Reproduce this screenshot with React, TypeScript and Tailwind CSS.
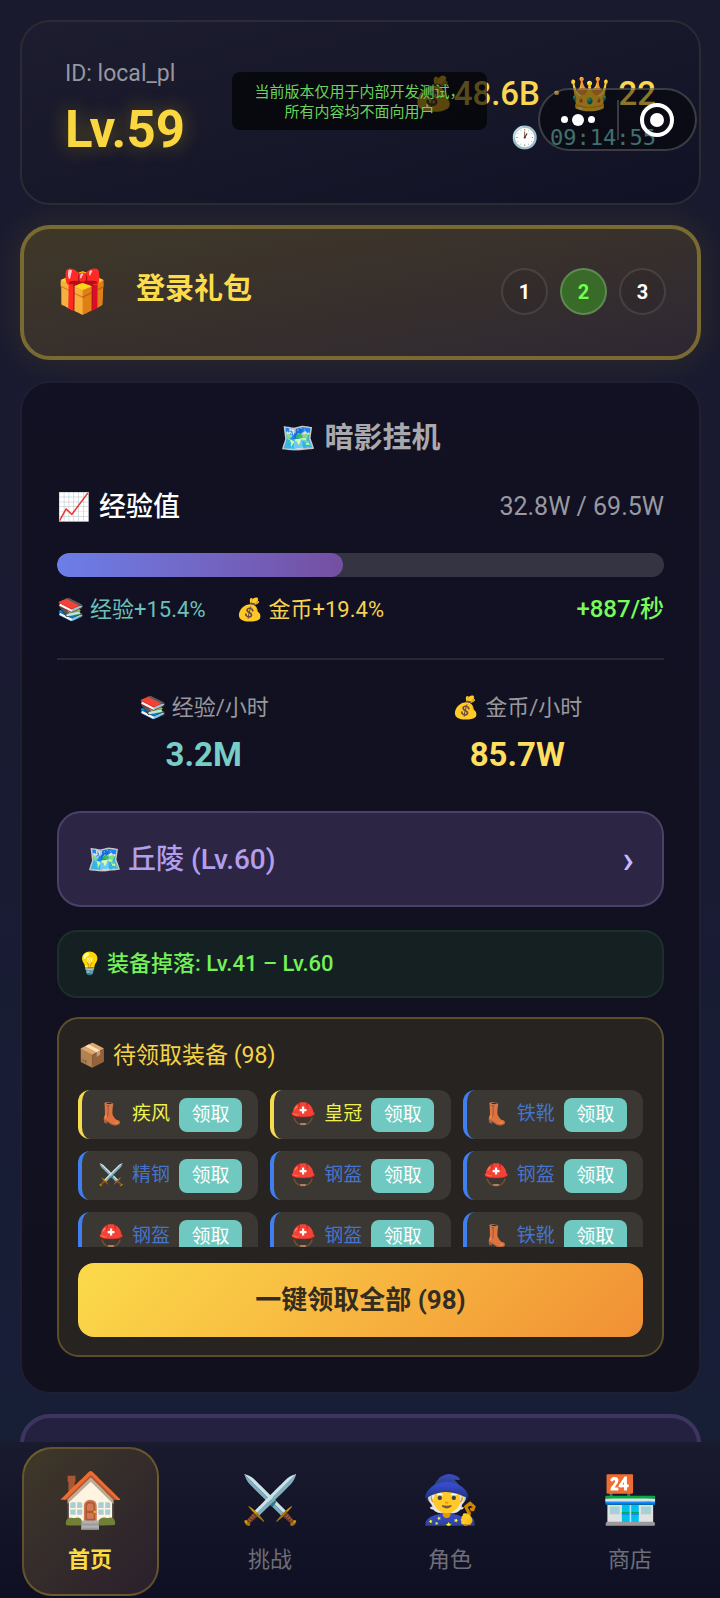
import { useState } from "react";

const days = [
  { day: 1, claimed: false },
  { day: 2, claimed: true },
  { day: 3, claimed: false },
];

const stats = [
  { icon: "📚", label: "经验/小时", value: "3.2M", color: "text-[#78cdc6]" },
  { icon: "💰", label: "金币/小时", value: "85.7W", color: "text-[#ffdf5f]" },
];

const loot = [
  { icon: "👢", name: "疾风", rare: true },
  { icon: "⛑️", name: "皇冠", rare: true },
  { icon: "👢", name: "铁靴", rare: false },
  { icon: "⚔️", name: "精钢", rare: false },
  { icon: "⛑️", name: "钢盔", rare: false },
  { icon: "⛑️", name: "钢盔", rare: false },
  { icon: "⛑️", name: "钢盔", rare: false },
  { icon: "⛑️", name: "钢盔", rare: false },
  { icon: "👢", name: "铁靴", rare: false },
];

const tabs = [
  { id: "home", icon: "🏠", label: "首页" },
  { id: "battle", icon: "⚔️", label: "挑战" },
  { id: "role", icon: "🧙", label: "角色" },
  { id: "shop", icon: "🏪", label: "商店" },
];

const exp = { current: 32.8, max: 69.5 };

const Header = () => (
  <header className="relative flex h-[185px] justify-between rounded-[30px] border-2 border-[#2b2b34] bg-linear-to-br from-[#1d1d2f] to-[#121226] px-[43px] pt-[36px]">
    <div>
      <p className="text-[23px] leading-[32px] text-[#97979f]">ID: local_pl</p>
      <p className="mt-[12px] text-[51px] leading-[56px] font-bold text-[#fad73f] [text-shadow:0_0_20px_rgba(255,215,0,0.35)]">
        Lv.59
      </p>
    </div>
    <div className="pt-[12px] text-right">
      <p className="flex justify-end gap-2 text-[33px] leading-[48px] font-medium text-[#fad74f]">
        <span>💰48.6B</span>
        <span className="pl-1">·</span>
        <span>👑 22</span>
      </p>
      <p className="flex items-center justify-end gap-3 text-[22px] leading-[40px] text-[#74ccc8]">
        <span>🕐</span>
        <span className="font-['DejaVu_Sans_Mono',monospace]">09:14:55</span>
      </p>
    </div>

    {/* build notice */}
    <div className="absolute top-[50px] left-[210px] w-[255px] rounded-lg bg-black/65 pt-[10px] pb-[8px] text-center text-[15px] leading-[20px] text-[#69d35e]">
      当前版本仅用于内部开发测试，
      <br />
      所有内容均不面向用户
    </div>

    {/* mini-program capsule */}
    <div className="absolute top-[66px] right-[2px] flex h-[63px] w-[159px] items-center rounded-full border-2 border-white/20 bg-black/45">
      <button aria-label="更多" className="flex flex-1 items-center justify-center gap-1">
        <span className="size-[7px] rounded-full bg-white" />
        <span className="size-[12px] rounded-full bg-white" />
        <span className="size-[7px] rounded-full bg-white" />
      </button>
      <span className="h-[40px] w-[2px] bg-white/20" />
      <button aria-label="关闭" className="flex flex-1 justify-center">
        <span className="flex size-[34px] items-center justify-center rounded-full border-4 border-white">
          <span className="size-[14px] rounded-full bg-white" />
        </span>
      </button>
    </div>
  </header>
);

const LoginGift = () => (
  <section className="mt-[20px] flex h-[135px] items-center rounded-[30px] border-4 border-[#796a31] bg-linear-to-br from-[#3f3828] via-[#38302c] to-[#2e2733] pr-[31px] pb-[2px] pl-[32px] shadow-[0_0_36px_rgba(255,215,0,0.1)]">
    <span className="w-[52px] text-[42px] leading-[56px]">🎁</span>
    <h2 className="ml-[28px] flex-1 pb-[6px] text-[29px] leading-[40px] font-bold text-[#fbdc4b]">登录礼包</h2>
    <div className="flex gap-3">
      {days.map((d) => (
        <button
          key={d.day}
          className={
            d.claimed
              ? "size-[47px] rounded-full border-2 border-white/20 bg-[#386b27] text-[20px] font-bold text-[#6fff4f]"
              : "size-[47px] rounded-full border-2 border-white/10 bg-black/5 text-[20px] font-bold text-white"
          }
        >
          {d.day}
        </button>
      ))}
    </div>
  </section>
);

const ExpPanel = () => (
  <div>
    <div className="flex h-[40px] items-center justify-between">
      <h3 className="flex items-center gap-2 text-[27px] font-medium text-white">
        <span>📈</span>
        经验值
      </h3>
      <span className="text-[25px] text-[#9999a1]">32.8W / 69.5W</span>
    </div>
    <div className="mt-[26px] h-[24px] overflow-hidden rounded-full bg-white/15">
      <div
        className="h-full rounded-full bg-linear-to-r from-[#6b7ee8] to-[#744fa2]"
        style={{ width: `${(exp.current / exp.max) * 100}%` }}
      />
    </div>
    <div className="mt-[16px] flex h-[32px] items-center text-[22px]">
      <span className="flex items-center gap-[6px] text-[#6cc0b9]">
        <span>📚</span>经验+15.4%
      </span>
      <span className="ml-[30px] flex items-center gap-[6px] text-[#f5d250]">
        <span>💰</span>金币+19.4%
      </span>
      <span className="ml-auto text-[24px] font-medium text-[#79fb5b]">+887/秒</span>
    </div>
  </div>
);

const Loot = () => (
  <div className="mt-[19px] rounded-[22px] border-2 border-[#5b4f2b] bg-[#272320] px-[19px] pt-[19px] pb-[18px]">
    <h3 className="flex items-center gap-[6px] text-[23px] leading-[36px] text-[#f5d346]">
      <span>📦</span>待领取装备 (98)
    </h3>
    <div className="mt-[16px] grid h-[157px] grid-cols-3 content-start gap-3 overflow-hidden">
      {loot.map((item, i) => (
        <div
          key={i}
          className={
            item.rare
              ? "flex h-[49px] items-center rounded-xl border-l-4 border-[#f5dc4a] bg-[#3b3732] pl-4"
              : "flex h-[49px] items-center rounded-xl border-l-4 border-[#3f7ff0] bg-[#3b3732] pl-4"
          }
        >
          <span className="w-[34px] text-[21px]">{item.icon}</span>
          <span className={item.rare ? "text-[19px] text-[#eef24e]" : "text-[19px] text-[#4474cc]"}>
            {item.name}
          </span>
          <button className="ml-[9px] h-[34px] w-[63px] rounded-lg bg-[#70c9c0] pt-[2px] text-[19px] text-white">
            领取
          </button>
        </div>
      ))}
    </div>
    <button className="mt-[16px] h-[74px] w-full rounded-2xl bg-linear-135 from-[#fbdb4a] to-[#f08f35] text-[26px] font-bold text-[#332d1f]">
      一键领取全部 (98)
    </button>
  </div>
);

const App = () => {
  const [active, setActive] = useState("home");

  return (
    <div className="flex h-screen flex-col overflow-hidden bg-linear-to-b from-[#1a1a2e] via-[#191b32] to-[#161f38] font-[Roboto,'Noto_Sans_CJK_SC',sans-serif]">
      <main className="min-h-0 flex-1 overflow-hidden pt-[20px] pr-[19px] pl-[20px]">
        <Header />
        <LoginGift />

        <section className="mt-[21px] rounded-[30px] border-2 border-[#1f1f32] bg-linear-to-b from-[#111123] to-[#10101f] px-[35px] pt-[35px] pb-[35px]">
          <h2 className="flex items-center justify-center gap-2 text-[29px] leading-[40px] font-bold text-[#a9a9ad]">
            <span>🗺️</span>
            暗影挂机
          </h2>
          <div className="mt-[29px]">
            <ExpPanel />
          </div>

          <div className="mt-[33px] flex gap-5 border-t-2 border-[#272735] pt-[30px]">
            {stats.map((s) => (
              <div key={s.label} className="flex-1 text-center">
                <p className="flex items-center justify-center gap-[6px] text-[22px] leading-[36px] text-[#98989e]">
                  <span>{s.icon}</span>
                  {s.label}
                </p>
                <p className={`mt-[7px] text-[33px] leading-[44px] font-bold ${s.color}`}>{s.value}</p>
              </div>
            ))}
          </div>

          <button className="mt-[34px] flex h-[96px] w-full items-center rounded-3xl border-2 border-[#4b4168] bg-[#2d2544] px-[28px] pt-[2px] text-[28px] font-medium text-[#b29fec]">
            <span className="mr-[6px]">🗺️</span>
            丘陵 (Lv.60)
            <span className="ml-auto text-[38px] text-[#c9b8ff]">›</span>
          </button>

          <p className="mt-[23px] flex h-[68px] items-center gap-1 rounded-[20px] border-2 border-[#1b3028] bg-[#142021] px-[17px] pb-[2px] text-[22px] font-medium text-[#74f257]">
            <span>💡</span>装备掉落: Lv.41 – Lv.60
          </p>

          <Loot />
        </section>

        <section className="mt-[20px] h-[200px] rounded-[30px] border-4 border-[#3d3560] bg-[#242140]" />
      </main>

      <nav className="grid h-[156px] shrink-0 grid-cols-4 border-t-2 border-white/5 bg-linear-to-b from-[#1a1a2e] to-[#0f0f23] pt-[3px]">
        {tabs.map((t) => (
          <button
            key={t.id}
            onClick={() => setActive(t.id)}
            className={
              active === t.id
                ? "mx-auto flex h-[149px] w-[137px] flex-col items-center rounded-[30px] border-2 border-[#fdd835]/25 bg-linear-to-br from-[#3f3828] to-[#2a1f2c] text-[22px] font-bold text-[#fbdc3f]"
                : "mx-auto flex h-[149px] w-[137px] flex-col items-center border-2 border-transparent text-[22px] text-[#6e6e78]"
            }
          >
            <span
              className={
                active === t.id ? "mt-[15px] h-[78px] text-[54px] leading-[72px]" : "mt-[15px] h-[78px] text-[47px] leading-[72px]"
              }
            >
              {t.icon}
            </span>
            <span className="leading-[36px]">{t.label}</span>
          </button>
        ))}
      </nav>
    </div>
  );
};

export default App;
